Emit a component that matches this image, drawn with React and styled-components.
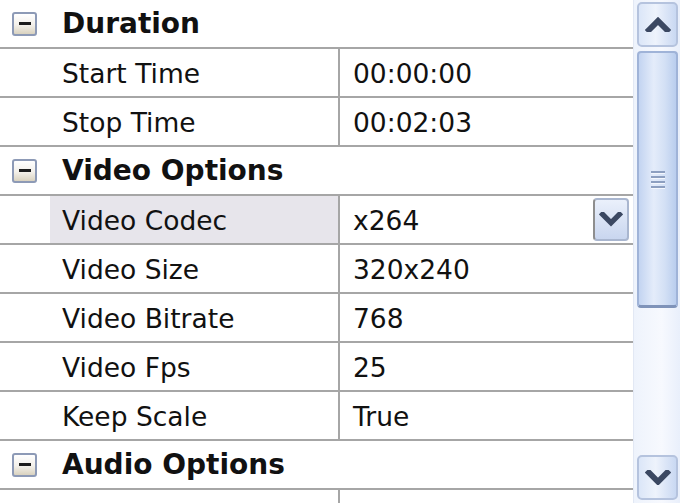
import React from "react";
import styled, { createGlobalStyle } from "styled-components";

const GlobalStyle = createGlobalStyle`
  html, body {
    margin: 0;
    padding: 0;
    background: #ffffff;
    overflow: hidden;
  }
`;

const Frame = styled.div`
  display: flex;
  width: 680px;
  height: 503px;
  overflow: hidden;
  background: #ffffff;
  font-family: "DejaVu Sans", "Liberation Sans", sans-serif;
  color: #111;
`;

const Grid = styled.div`
  flex: 0 0 633px;
  display: flex;
  flex-direction: column;
  overflow: hidden;
`;

const CategoryRow = styled.div`
  flex: 0 0 47px;
  display: flex;
  align-items: center;
  border-bottom: 2px solid #a6a6a6;
  padding-left: 12px;
  gap: 25px;
`;

const CategoryTitle = styled.span`
  font-weight: bold;
  font-size: 28px;
  line-height: 1;
  padding-top: 1px;
`;

const Toggle = styled.span`
  box-sizing: border-box;
  width: 25px;
  height: 24px;
  border: 2px solid #8d9ab6;
  border-radius: 3px;
  background: linear-gradient(#ffffff 0%, #f3f0ea 55%, #d9d2bf 100%);
  display: flex;
  align-items: center;
  justify-content: center;
  &::after {
    content: "";
    width: 12px;
    height: 3px;
    background: #1c1c1c;
  }
`;

const PropRow = styled.div`
  flex: 0 0 47px;
  display: grid;
  grid-template-columns: 50px 290px 1fr;
  border-bottom: 2px solid #a6a6a6;
`;

const Gutter = styled.div``;

const Label = styled.div`
  display: flex;
  align-items: center;
  padding: 2px 0 0 12px;
  font-size: 26.5px;
  border-right: 2px solid #a6a6a6;
  background: ${(p) => (p.$selected ? "#e7e5eb" : "transparent")};
  white-space: nowrap;
  overflow: hidden;
`;

const Value = styled.div`
  display: flex;
  align-items: center;
  justify-content: space-between;
  padding: 2px 4px 0 13px;
  font-size: 26.5px;
  white-space: nowrap;
`;

const DropButton = styled.div`
  box-sizing: border-box;
  width: 36px;
  height: 43px;
  margin-top: -2px;
  border: 2px solid #a9b6cf;
  border-left-color: #8e8e8e;
  border-radius: 4px;
  background: linear-gradient(#eaf0fb, #c9d6ef);
  display: flex;
  align-items: center;
  justify-content: center;
`;

const Scrollbar = styled.div`
  flex: 0 0 47px;
  box-sizing: border-box;
  display: flex;
  flex-direction: column;
  padding: 2px 2px 3px 3px;
  gap: 4px;
  background: linear-gradient(90deg, #eef3fc, #f7f9fe 60%, #e9effb);
  border-left: 1px solid #e2e8f4;
`;

const ScrollButton = styled.div`
  box-sizing: border-box;
  flex: 0 0 45px;
  border: 2px solid #b5c3de;
  border-radius: 5px;
  background: linear-gradient(90deg, #dbe6f8, #eef3fc 45%, #c9d8f2);
  display: flex;
  align-items: center;
  justify-content: center;
`;

const Thumb = styled.div`
  box-sizing: border-box;
  flex: 0 0 257px;
  border: 2px solid #9fb3d8;
  border-bottom-width: 3px;
  border-bottom-color: #7f93b9;
  border-radius: 4px;
  background: linear-gradient(90deg, #c3d4f1, #e4ecfa 40%, #d3e0f5 70%, #b9cdee);
  display: flex;
  align-items: center;
  justify-content: center;
`;

const Gripper = styled.div`
  display: flex;
  flex-direction: column;
  gap: 3px;
  span {
    width: 14px;
    height: 2px;
    background: #8d9fc0;
    box-shadow: 0 1px 0 #f4f7fd;
  }
`;

const Track = styled.div`
  flex: 1;
`;

const Chevron = ({ down, size = 20 }) => (
  <svg width={size} height={size * 0.6} viewBox="0 0 20 12">
    <path
      d={down ? "M3 2 L10 9 L17 2" : "M3 10 L10 3 L17 10"}
      fill="none"
      stroke="#3b4862"
      strokeWidth="4.5"
      strokeLinecap="square"
    />
  </svg>
);

const sections = [
  {
    title: "Duration",
    props: [
      ["Start Time", "00:00:00"],
      ["Stop Time", "00:02:03"],
    ],
  },
  {
    title: "Video Options",
    props: [
      ["Video Codec", "x264", true],
      ["Video Size", "320x240"],
      ["Video Bitrate", "768"],
      ["Video Fps", "25"],
      ["Keep Scale", "True"],
    ],
  },
  {
    title: "Audio Options",
    props: [["Audio Codec", "mp3"]],
  },
];

export default function App() {
  return (
    <>
      <GlobalStyle />
      <Frame>
        <Grid>
          {sections.map((s) => (
            <React.Fragment key={s.title}>
              <CategoryRow>
                <Toggle />
                <CategoryTitle>{s.title}</CategoryTitle>
              </CategoryRow>
              {s.props.map(([name, value, selected]) => (
                <PropRow key={name}>
                  <Gutter />
                  <Label $selected={selected}>{name}</Label>
                  <Value>
                    {value}
                    {selected && (
                      <DropButton>
                        <Chevron down size={24} />
                      </DropButton>
                    )}
                  </Value>
                </PropRow>
              ))}
            </React.Fragment>
          ))}
        </Grid>
        <Scrollbar>
          <ScrollButton>
            <Chevron size={26} />
          </ScrollButton>
          <Thumb>
            <Gripper>
              <span />
              <span />
              <span />
              <span />
            </Gripper>
          </Thumb>
          <Track />
          <ScrollButton>
            <Chevron down size={26} />
          </ScrollButton>
        </Scrollbar>
      </Frame>
    </>
  );
}
